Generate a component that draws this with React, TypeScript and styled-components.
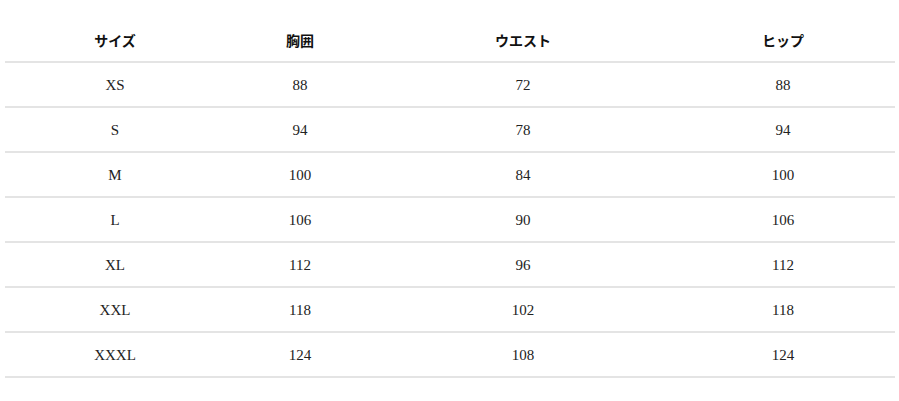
import React from "react";
import styled, { createGlobalStyle } from "styled-components";

const Global = createGlobalStyle`
  html, body { margin: 0; padding: 0; background: #ffffff; }
`;

const Wrap = styled.div`
  padding: 18px 4px 0 5px;
`;

const Table = styled.table`
  width: 890px;
  border-collapse: collapse;
  table-layout: fixed;
`;

const Th = styled.th<{ $w: number }>`
  width: ${(p) => p.$w}px;
  height: 43px;
  padding: 0;
  border-bottom: 2px solid #e4e4e4;
  font-family: "Noto Sans CJK JP", "Noto Sans", sans-serif;
  font-weight: 700;
  font-size: 14px;
  color: #111;
  text-align: center;
  vertical-align: middle;
`;

const Td = styled.td`
  height: 42px;
  padding: 1px 0 0;
  border-bottom: 2px solid #e4e4e4;
  font-family: "Liberation Serif", "DejaVu Serif", serif;
  font-size: 15px;
  color: #222;
  text-align: center;
  vertical-align: middle;
`;

const cols = [
  { label: "サイズ", w: 220 },
  { label: "胸囲", w: 150 },
  { label: "ウエスト", w: 296 },
  { label: "ヒップ", w: 224 },
];

const rows = [
  ["XS", "88", "72", "88"],
  ["S", "94", "78", "94"],
  ["M", "100", "84", "100"],
  ["L", "106", "90", "106"],
  ["XL", "112", "96", "112"],
  ["XXL", "118", "102", "118"],
  ["XXXL", "124", "108", "124"],
];

export default function App() {
  return (
    <>
      <Global />
      <Wrap>
        <Table>
          <thead>
            <tr>
              {cols.map((c) => (
                <Th key={c.label} $w={c.w}>
                  {c.label}
                </Th>
              ))}
            </tr>
          </thead>
          <tbody>
            {rows.map((r) => (
              <tr key={r[0]}>
                {r.map((v, i) => (
                  <Td key={i}>{v}</Td>
                ))}
              </tr>
            ))}
          </tbody>
        </Table>
      </Wrap>
    </>
  );
}
